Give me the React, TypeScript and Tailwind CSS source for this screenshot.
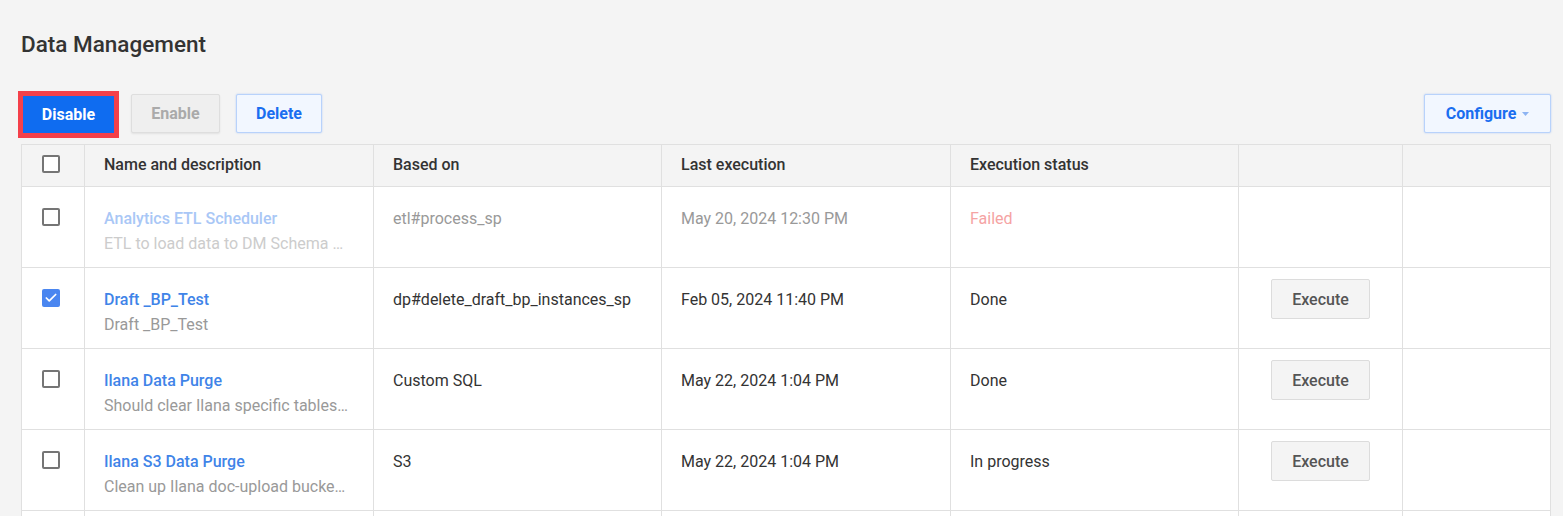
import { Check } from "lucide-react";

type Job = {
  name: string;
  description: string;
  basedOn: string;
  lastRun: string;
  status: string;
  checked?: boolean;
  disabled?: boolean;
};

const jobs: Job[] = [
  {
    name: "Analytics ETL Scheduler",
    description: "ETL to load data to DM Schema …",
    basedOn: "etl#process_sp",
    lastRun: "May 20, 2024 12:30 PM",
    status: "Failed",
    disabled: true,
  },
  {
    name: "Draft _BP_Test",
    description: "Draft _BP_Test",
    basedOn: "dp#delete_draft_bp_instances_sp",
    lastRun: "Feb 05, 2024 11:40 PM",
    status: "Done",
    checked: true,
  },
  {
    name: "Ilana Data Purge",
    description: "Should clear Ilana specific tables…",
    basedOn: "Custom SQL",
    lastRun: "May 22, 2024 1:04 PM",
    status: "Done",
  },
  {
    name: "Ilana S3 Data Purge",
    description: "Clean up Ilana doc-upload bucke…",
    basedOn: "S3",
    lastRun: "May 22, 2024 1:04 PM",
    status: "In progress",
  },
];

function Checkbox({ checked }: { checked?: boolean }) {
  if (checked) {
    return (
      <span className="grid size-[18px] place-items-center rounded-[2px] bg-[#4a86f0]">
        <Check className="size-[14px] text-white" strokeWidth={3} />
      </span>
    );
  }
  return <span className="block size-[18px] rounded-[2px] border-2 border-[#757575] bg-white" />;
}

const cell = "border border-[#e0e0e0]";

export default function App() {
  return (
    <div className="h-[516px] overflow-hidden bg-[#f4f4f4] pl-[21px] pr-[12px] pt-[30px] font-['Roboto',sans-serif] text-[#333]">
      <h1 className="text-[22.5px] font-medium leading-[29px] text-[#333]">Data Management</h1>

      <div className="mt-[35px] flex items-end justify-between">
        <div className="flex items-end gap-[17px]">
          <button
            type="button"
            className="ml-[2px] h-[37px] w-[91px] bg-[#0f6cf0] text-[16px] font-bold text-white outline-[5px] outline-solid outline-[#f4404a]"
          >
            Disable
          </button>
          <button
            type="button"
            className="h-[39px] w-[89px] rounded-[2px] border border-[#dedede] bg-[#efefef] text-[16px] font-bold text-[#aaa] shadow-[0_1px_2px_rgba(0,0,0,0.08)]"
          >
            Enable
          </button>
          <button
            type="button"
            className="ml-[-1px] h-[39px] w-[86px] rounded-[2px] border border-[#b8d2fb] bg-[#f2f7ff] text-[16px] font-bold text-[#1a6ef0] shadow-[0_0_2px_rgba(60,130,240,0.35)]"
          >
            Delete
          </button>
        </div>
        <button
          type="button"
          className="flex h-[39px] w-[127px] items-center justify-center gap-[6px] rounded-[2px] border border-[#b8d2fb] bg-[#f2f7ff] text-[16px] font-bold text-[#1a6ef0] shadow-[0_0_2px_rgba(60,130,240,0.35)]"
        >
          Configure
          <svg width="7" height="4" viewBox="0 0 7 4" className="mt-[1px]">
            <path d="M0 0h7L3.5 4z" fill="#8db4f3" />
          </svg>
        </button>
      </div>

      <table className="mt-[11px] w-[1530px] table-fixed border-collapse text-[16px]">
        <colgroup>
          <col className="w-[63px]" />
          <col className="w-[289px]" />
          <col className="w-[288px]" />
          <col className="w-[289px]" />
          <col className="w-[288px]" />
          <col className="w-[164px]" />
          <col className="w-[148px]" />
        </colgroup>
        <thead>
          <tr className="h-[42px] bg-[#f4f4f4] text-left">
            <th className={`${cell} p-0`}>
              <div className="flex justify-center pr-[5px] pb-[3px]">
                <Checkbox />
              </div>
            </th>
            {["Name and description", "Based on", "Last execution", "Execution status", "", ""].map((h, i) => (
              <th key={i} className={`${cell} px-[19px] pb-[1px] font-medium text-[#333]`}>
                {h}
              </th>
            ))}
          </tr>
        </thead>
        <tbody>
          {jobs.map((job) => {
            const muted = job.disabled;
            return (
              <tr key={job.name} className="h-[81px] bg-white align-top">
                <td className={`${cell} p-0`}>
                  <div className="flex justify-center pr-[5px] pt-[21px]">
                    <Checkbox checked={job.checked} />
                  </div>
                </td>
                <td className={`${cell} px-[19px] pt-[19px]`}>
                  <div
                    className={`whitespace-nowrap font-medium leading-[25px] ${muted ? "text-[#a9c7f6]" : "text-[#3f84e8]"}`}
                  >
                    {job.name}
                  </div>
                  <div className={`whitespace-nowrap leading-[25px] ${muted ? "text-[#cccccc]" : "text-[#999]"}`}>
                    {job.description}
                  </div>
                </td>
                <td className={`${cell} px-[19px] pt-[19px] leading-[25px] ${muted ? "text-[#999]" : "text-[#333]"}`}>
                  {job.basedOn}
                </td>
                <td className={`${cell} px-[19px] pt-[19px] leading-[25px] ${muted ? "text-[#999]" : "text-[#333]"}`}>
                  {job.lastRun}
                </td>
                <td
                  className={`${cell} px-[19px] pt-[19px] leading-[25px] ${muted ? "text-[#f5a3a3]" : "text-[#333]"}`}
                >
                  {job.status}
                </td>
                <td className={`${cell} p-0`}>
                  {!muted && (
                    <div className="flex justify-center pt-[11px]">
                      <button
                        type="button"
                        className="h-[40px] w-[99px] rounded-[2px] border border-[#dcdcdc] bg-[#f4f4f4] pt-[1px] text-[16px] font-medium text-[#555]"
                      >
                        Execute
                      </button>
                    </div>
                  )}
                </td>
                <td className={`${cell} p-0`} />
              </tr>
            );
          })}
          <tr className="h-[81px] bg-white">
            {Array.from({ length: 7 }).map((_, i) => (
              <td key={i} className={`${cell} p-0`} />
            ))}
          </tr>
        </tbody>
      </table>
    </div>
  );
}
